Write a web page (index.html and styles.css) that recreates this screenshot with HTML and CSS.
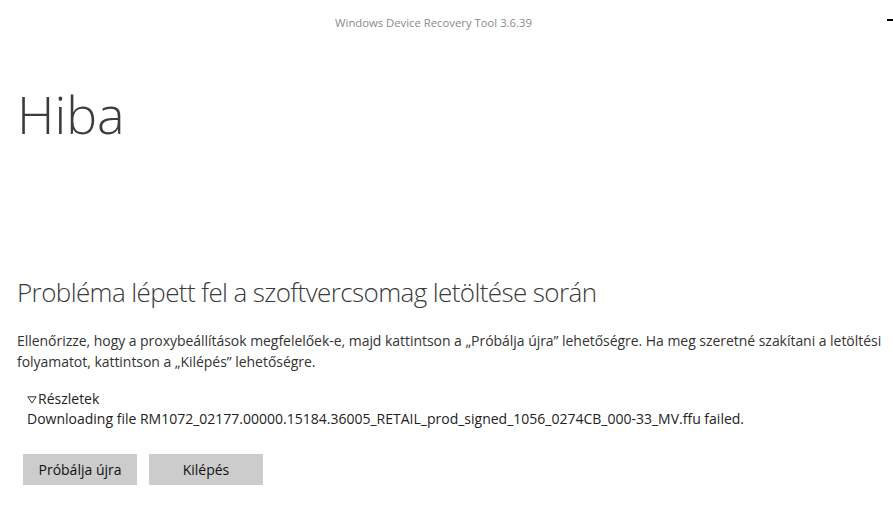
FILE: index.html
```html
<!DOCTYPE html>
<html lang="hu">
<head>
    <meta charset="UTF-8">
    <meta name="viewport" content="width=device-width, initial-scale=1.0">
    <title>Windows Device Recovery Tool 3.6.39</title>
    <link rel="stylesheet" href="styles.css">
</head>
<body>
    <header class="titlebar">
        <span class="app-title">Windows Device Recovery Tool 3.6.39</span>
        <span class="minimize"></span>
    </header>

    <main class="content">
        <h1 class="page-title">Hiba</h1>

        <h2 class="error-title">Probléma lépett fel a szoftvercsomag letöltése során</h2>
        <p class="error-text">Ellenőrizze, hogy a proxybeállítások megfelelőek-e, majd kattintson a „Próbálja újra” lehetőségre. Ha meg szeretné szakítani a letöltési folyamatot, kattintson a „Kilépés” lehetőségre.</p>

        <div class="details">
            <div class="details-toggle">
                <svg class="arrow" width="10" height="8" viewBox="0 0 10 8">
                    <path d="M0.8 0.8 H9.2 L5 7 Z" fill="none" stroke="#333" stroke-width="1"/>
                </svg>Részletek
            </div>
            <div class="details-text">Downloading file RM1072_02177.00000.15184.36005_RETAIL_prod_signed_1056_0274CB_000-33_MV.ffu failed.</div>
        </div>

        <div class="actions">
            <button class="btn">Próbálja újra</button>
            <button class="btn">Kilépés</button>
        </div>
    </main>
</body>
</html>
```

FILE: styles.css
```css
* {
    margin: 0;
    padding: 0;
    box-sizing: border-box;
}

body {
    background-color: #fff;
    color: #333;
    font-family: "Open Sans", "Noto Sans", sans-serif;
    width: 893px;
    height: 519px;
    overflow: hidden;
}

/* title bar */
.titlebar {
    position: relative;
    height: 36px;
    text-align: center;
    padding-top: 10px;
}

.app-title {
    font-size: 11.3px;
    color: #8a8a8a;
    margin-left: -26px;
}

.minimize {
    position: absolute;
    top: 19px;
    right: 0;
    width: 6px;
    height: 2px;
    background-color: #000;
}

/* main */
.content {
    padding: 0 17px;
}

.page-title {
    font-size: 52px;
    font-weight: 300;
    color: #3c3c3c;
    margin-top: 42px;
    line-height: 72px;
}

.error-title {
    font-size: 26px;
    font-weight: 300;
    color: #3a3a3a;
    margin-top: 124px;
    line-height: 36px;
    letter-spacing: -0.6px;
}

.error-text {
    width: 872px;
    font-size: 14px;
    color: #333;
    line-height: 21px;
    margin-top: 20px;
    letter-spacing: -0.04px;
}

.details {
    margin-top: 17px;
    padding-left: 10px;
    font-size: 14px;
    color: #222;
    line-height: 20px;
}

.details-toggle .arrow {
    margin-right: 1px;
}

.actions {
    display: flex;
    gap: 12px;
    margin-top: 25px;
    padding-left: 6px;
}

.btn {
    width: 114px;
    height: 31px;
    background-color: #ccc;
    border: none;
    font-family: "Open Sans", "Noto Sans", sans-serif;
    font-size: 14px;
    color: #111;
}
```
